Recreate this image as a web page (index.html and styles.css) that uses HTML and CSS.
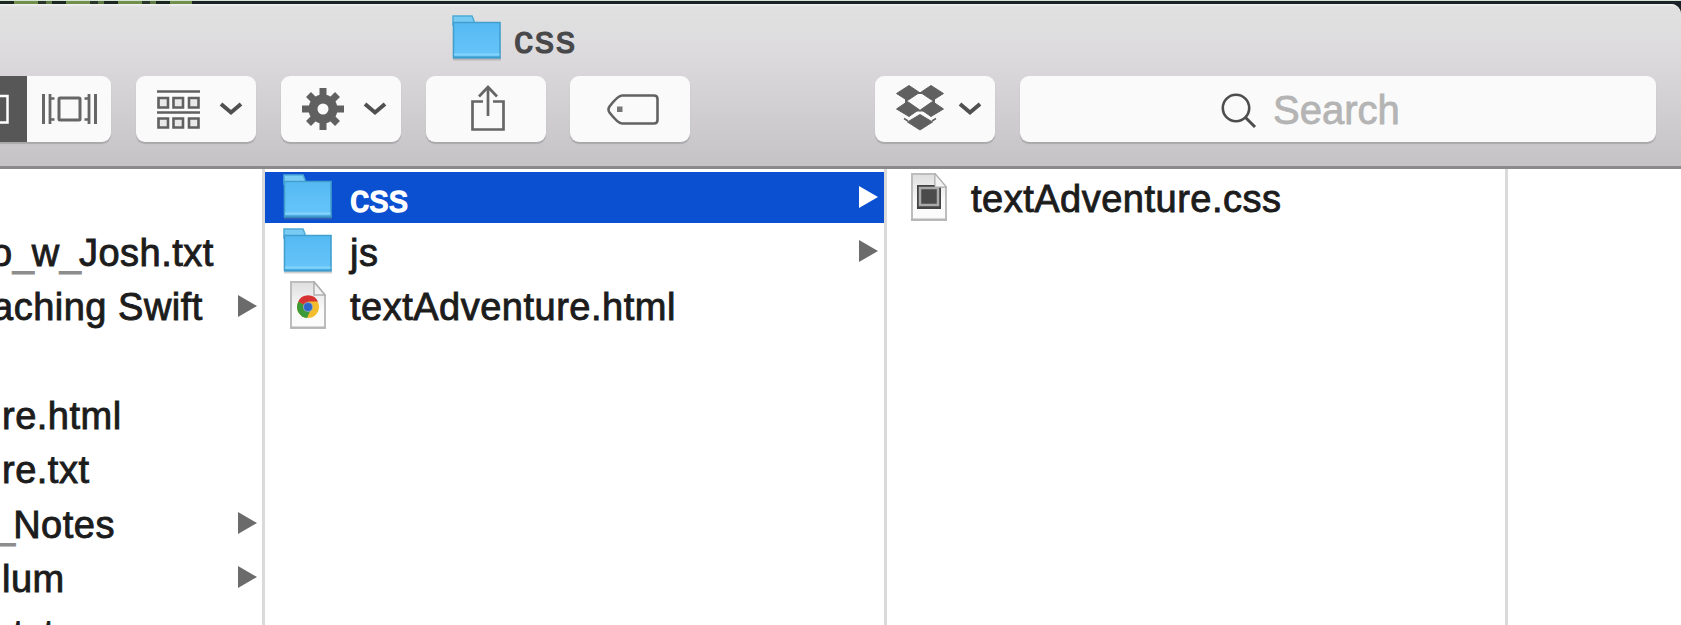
FILE: index.html
```html
<!DOCTYPE html>
<html lang="en">
<head>
<meta charset="utf-8">
<title>css</title>
<link rel="stylesheet" href="styles.css">
</head>
<body>
<svg class="defs" width="0" height="0" aria-hidden="true">
  <defs>
    <linearGradient id="blue" x1="0" y1="0" x2="0" y2="1"><stop offset="0" stop-color="#55b9f2"/><stop offset="1" stop-color="#67c6fa"/></linearGradient>
    <linearGradient id="paper" x1="0" y1="0" x2="0" y2="1"><stop offset="0" stop-color="#dedede"/><stop offset=".6" stop-color="#fbfbfb"/></linearGradient>
    <symbol id="folder" viewBox="0 0 50 46">
      <path d="M1 44H49" stroke="#777" stroke-opacity=".35" stroke-width="3"/>
      <path d="M1 1H20L22 6V10H1Z" fill="#78cbf3" stroke="#4eabd6" stroke-width="1.5"/>
      <path d="M1.500 7.500H48V42.500H1.500Z" fill="url(#blue)" stroke="#429fcd" stroke-width="1.600"/>
      <path d="M2 39.500H47.500" stroke="#83d3fb" stroke-width="2"/>
      <path d="M1 42.500H48.500" stroke="#3e9ccc" stroke-width="2"/>
    </symbol>
    <symbol id="page" viewBox="0 0 36 48">
      <path d="M1 1H24L35 14V47H1Z" fill="url(#paper)" stroke="#bdbdbd" stroke-width="2"/>
      <path d="M24 1V14H35Z" fill="#f2f2f2" stroke="#b0b0b0" stroke-width="1.500"/>
      <path d="M0 46.500H36" stroke="#b5b5b5" stroke-width="2"/>
    </symbol>
    <symbol id="chevron" viewBox="0 0 24 14"><path d="M2 2L12 10.500L22 2" fill="none" stroke="#505050" stroke-width="4"/></symbol>
    <symbol id="arrow" viewBox="0 0 19 22"><path d="M0 0L19 11L0 22Z" fill="currentColor"/></symbol>
  </defs>
</svg>
<div class="desktop">
  <main class="window">
    <header class="chrome">
      <div class="titlebar">
        <svg class="folder"><use href="#folder"/></svg>
        <span class="title">css</span>
      </div>
      <div class="toolbar">
        <div class="button views">
          <div class="view-active"><svg width="27" height="66" viewBox="0 0 27 66"><path d="M-2 20H7.500V46.500H-2" fill="none" stroke="#fff" stroke-width="2.500"/></svg></div>
          <svg class="flow" width="56" height="30" viewBox="0 0 56 30" fill="none" stroke="#666"><path d="M1.500 0V30M53.500 0V30" stroke-width="3"/><path d="M8 0V30M47 0V30" stroke-width="2.800"/><path d="M8 4.500H12.500M8 25.500H12.500M47 4.500H42.500M47 25.500H42.500" stroke-width="2.400"/><rect x="17" y="4" width="21" height="22" rx="1" stroke-width="3"/></svg>
        </div>
        <div class="button arrange">
          <svg width="43" height="39" viewBox="0 0 43 39" fill="#e9e9e9" stroke="#606060" stroke-width="2.600"><path d="M0 1.500H43M0 22.500H43"/><path d="M1.500 8H11V17.500H1.500ZM16.500 8H26V17.500H16.500ZM32 8H41.500V17.500H32ZM1.500 28.500H11V37.500H1.500ZM16.500 28.500H26V37.500H16.500ZM32 28.500H41.500V37.500H32Z"/></svg>
          <svg class="chevron"><use href="#chevron"/></svg>
        </div>
        <div class="button action">
          <svg width="42" height="42" viewBox="0 0 42 42" fill="none" stroke="#606060"><circle cx="21" cy="21" r="10" stroke-width="9"/><path d="M21 0V9M21 33V42M0 21H9M33 21H42" stroke-width="7"/><path d="M6.500 6.500L13 13M29 29L35.500 35.500M6.500 35.500L13 29M29 13L35.500 6.500" stroke-width="7"/></svg>
          <svg class="chevron"><use href="#chevron"/></svg>
        </div>
        <div class="button share">
          <svg width="34" height="46" viewBox="0 0 34 46" fill="none" stroke="#666" stroke-width="2.700"><path d="M12 16.500H1.500V44.500H32.500V16.500H22"/><path d="M17 31V2"/><path d="M8 11.500L17 2L26 11.500"/></svg>
        </div>
        <div class="button tag">
          <svg width="52" height="31" viewBox="0 0 52 31"><path d="M15 1.500H47Q50.500 1.500 50.500 5V26Q50.500 29.500 47 29.500H15Q11 29.500 2.500 18.500Q.5 15.500 2.500 12.500Q11 1.500 15 1.500Z" fill="none" stroke="#626262" stroke-width="2.600"/><rect x="10" y="12.500" width="5.500" height="5.500" fill="#777"/></svg>
        </div>
        <div class="button dropbox">
          <svg width="48" height="46" viewBox="0 0 48 46" fill="#606060" stroke="#606060" stroke-width="1" stroke-linejoin="round"><path d="M13 .5L23.500 7.500L11.500 15.500L.5 8.500ZM35 .5L47.500 8.500L36.500 15.500L24.500 7.500ZM11.500 16.500L23 24.500L13 31.500L.5 24ZM36.500 16.500L47.500 24L35 31.500L25 24.500Z"/><path d="M24 29.500L36.500 37L24 45L11.500 37Z"/><path d="M22 8H26M10 14V18M38 14V18M20 25.500H28" stroke-width="2"/><path d="M8 33.500L12 36M40 33.500L36 36" stroke-width="1.500"/></svg>
          <svg class="chevron"><use href="#chevron"/></svg>
        </div>
        <div class="button search">
          <svg width="36" height="36" viewBox="0 0 36 36" fill="none" stroke="#4d4d4d" stroke-width="2.600"><circle cx="15" cy="15" r="13.200"/><path d="M24 24L34 34" stroke-width="3"/></svg>
          <span>Search</span>
        </div>
      </div>
    </header>
    <section class="browser">
      <div class="column parent">
        <div class="row"></div>
        <div class="row"><span class="name josh">o<span class="score">_</span>w<span class="score">_</span>Josh.txt</span></div>
        <div class="row"><span class="name swift">aching Swift</span><svg class="arrow"><use href="#arrow"/></svg></div>
        <div class="row"></div>
        <div class="row"><span class="name">re.html</span></div>
        <div class="row"><span class="name">re.txt</span></div>
        <div class="row"><span class="name notes"><span class="score">_</span>Notes</span><svg class="arrow"><use href="#arrow"/></svg></div>
        <div class="row"><span class="name">lum</span><svg class="arrow"><use href="#arrow"/></svg></div>
        <div class="row last"><span class="name">.txt</span></div>
      </div>
      <div class="column current">
        <div class="row selected"><svg class="folder"><use href="#folder"/></svg><span class="name">css</span><svg class="arrow"><use href="#arrow"/></svg></div>
        <div class="row"><svg class="folder"><use href="#folder"/></svg><span class="name">js</span><svg class="arrow"><use href="#arrow"/></svg></div>
        <div class="row"><svg class="file" viewBox="0 0 36 48"><use href="#page"/><circle cx="18" cy="26" r="11" fill="#f3bd2d"/><path d="M18 26L8.500 20.500A11 11 0 0 0 17 37L21 28Z" fill="#3c9a38"/><path d="M18 26L8.200 20.500A11 11 0 0 1 28 20.500H18Z" fill="#d63332"/><circle cx="18" cy="26" r="5" fill="#8fa4bf"/><circle cx="18" cy="26" r="4" fill="#2c66c9"/></svg><span class="name">textAdventure.html</span></div>
      </div>
      <div class="column child">
        <div class="row"><svg class="file" viewBox="0 0 36 48"><use href="#page"/><path d="M6 12H24V14.500H30V36H6Z" fill="#444"/><path d="M9 15H27V32H9Z" fill="#4b4b4b" stroke="#aaa" stroke-width="2.500"/><path d="M24 1V14H35Z" fill="#f2f2f2" stroke="#b0b0b0"/></svg><span class="name">textAdventure.css</span></div>
      </div>
      <div class="column preview"></div>
    </section>
  </main>
</div>
</body>
</html>
```
FILE: styles.css
```css
* { box-sizing: border-box; }
body { margin: 0; overflow: hidden; font-family: "Liberation Sans", Arial, sans-serif; }
svg { display: block; flex: none; }
.defs { position: absolute; }
.desktop {
  height: 625px;
  overflow: hidden;
  padding-top: 4px;
  background: linear-gradient(#d5e5d6 0 1px, transparent 1px),
    repeating-linear-gradient(90deg, #1d2722 0 14px, #71904b 14px 38px, #29352a 38px 46px, #5f7b43 46px 52px) 0 0 / 192px 4px no-repeat,
    #1b2328;
}
.window { height: 621px; background: #fff; border-top-right-radius: 10px; overflow: hidden; }
.chrome {
  height: 165px;
  border-bottom: 3px solid #8b898b;
  background: linear-gradient(#f2f2f2 0, #e1e1e1 3px, #dcdadd 50px, #c5c3c6 100%);
}
.titlebar { height: 72px; display: flex; justify-content: flex-start; padding: 11px 0 0 452px; gap: 12px; }
.folder { width: 50px; height: 46px; }
.title { font-size: 38px; line-height: 50px; color: #48484a; letter-spacing: 2px; -webkit-text-stroke: 1.2px #48484a; }
.toolbar { display: flex; gap: 25px; }
.button {
  width: 120px; height: 66px; border-radius: 9px; background: #fafafa;
  box-shadow: 0 2px 1px #aaa8ab; display: flex; align-items: center; flex: none;
}
.views { width: 111px; border-radius: 0 9px 9px 0; }
.view-active { width: 27px; background: #575757; }
.flow { margin-left: 15px; }
.chevron { width: 24px; height: 14px; margin-left: 19px; }
.arrange { padding-left: 21px; }
.action { padding-left: 21px; }
.share, .tag { justify-content: center; }
.share svg { margin: 0 0 3px 3px; }
.tag { margin-left: -1px; }
.tag svg { margin-left: 5px; }
.dropbox { margin-left: 160px; padding-left: 21px; }
.dropbox svg:first-child { margin-bottom: 3px; }
.dropbox .chevron { margin-left: 14px; }
.search { width: 636px; padding-left: 201px; gap: 16px; font-size: 40px; color: #b4b4b4; -webkit-text-stroke: .8px #b4b4b4; }
.search svg { margin-top: 3px; }
.search span { padding-top: 2px; }
.browser { display: grid; grid-template-columns: 265px 622px 621px 1fr; height: 456px; }
.column { padding-top: 3px; border-right: 3px solid #dadada; overflow: hidden; }
.preview { border: 0; }
.row { height: 51px; margin-bottom: 3.35px; display: flex; align-items: center; padding-right: 6px; color: #1c1c1c; }
.name { font-size: 38px; line-height: 50px; padding-top: 2px; white-space: nowrap; letter-spacing: .5px; -webkit-text-stroke: .9px currentColor; }
.score { letter-spacing: -2px; color: #8d8d8d; }
.arrow { width: 19px; height: 22px; margin-left: auto; margin-bottom: 1px; color: #6b6b6b; }
.parent .row { padding-left: 2px; }
.parent .arrow { margin-right: -1px; }
.josh { margin-left: -11px; }
.swift { margin-left: -10px; }
.notes { margin-left: -8px; }
.last .name { padding-top: 4px; }
.current .row { padding-left: 18px; }
.current .folder { margin-bottom: 2px; }
.current .name { margin-left: 17px; }
.file { width: 36px; height: 48px; margin: 0 7px 2px 7px; }
.selected { background: #0a50d1; color: #fff; }
.selected .name { -webkit-text-stroke-width: 1.5px; }
.selected .arrow { color: #fff; }
.child .row { padding-left: 17px; }
.child .name { margin-left: 17px; }
```
